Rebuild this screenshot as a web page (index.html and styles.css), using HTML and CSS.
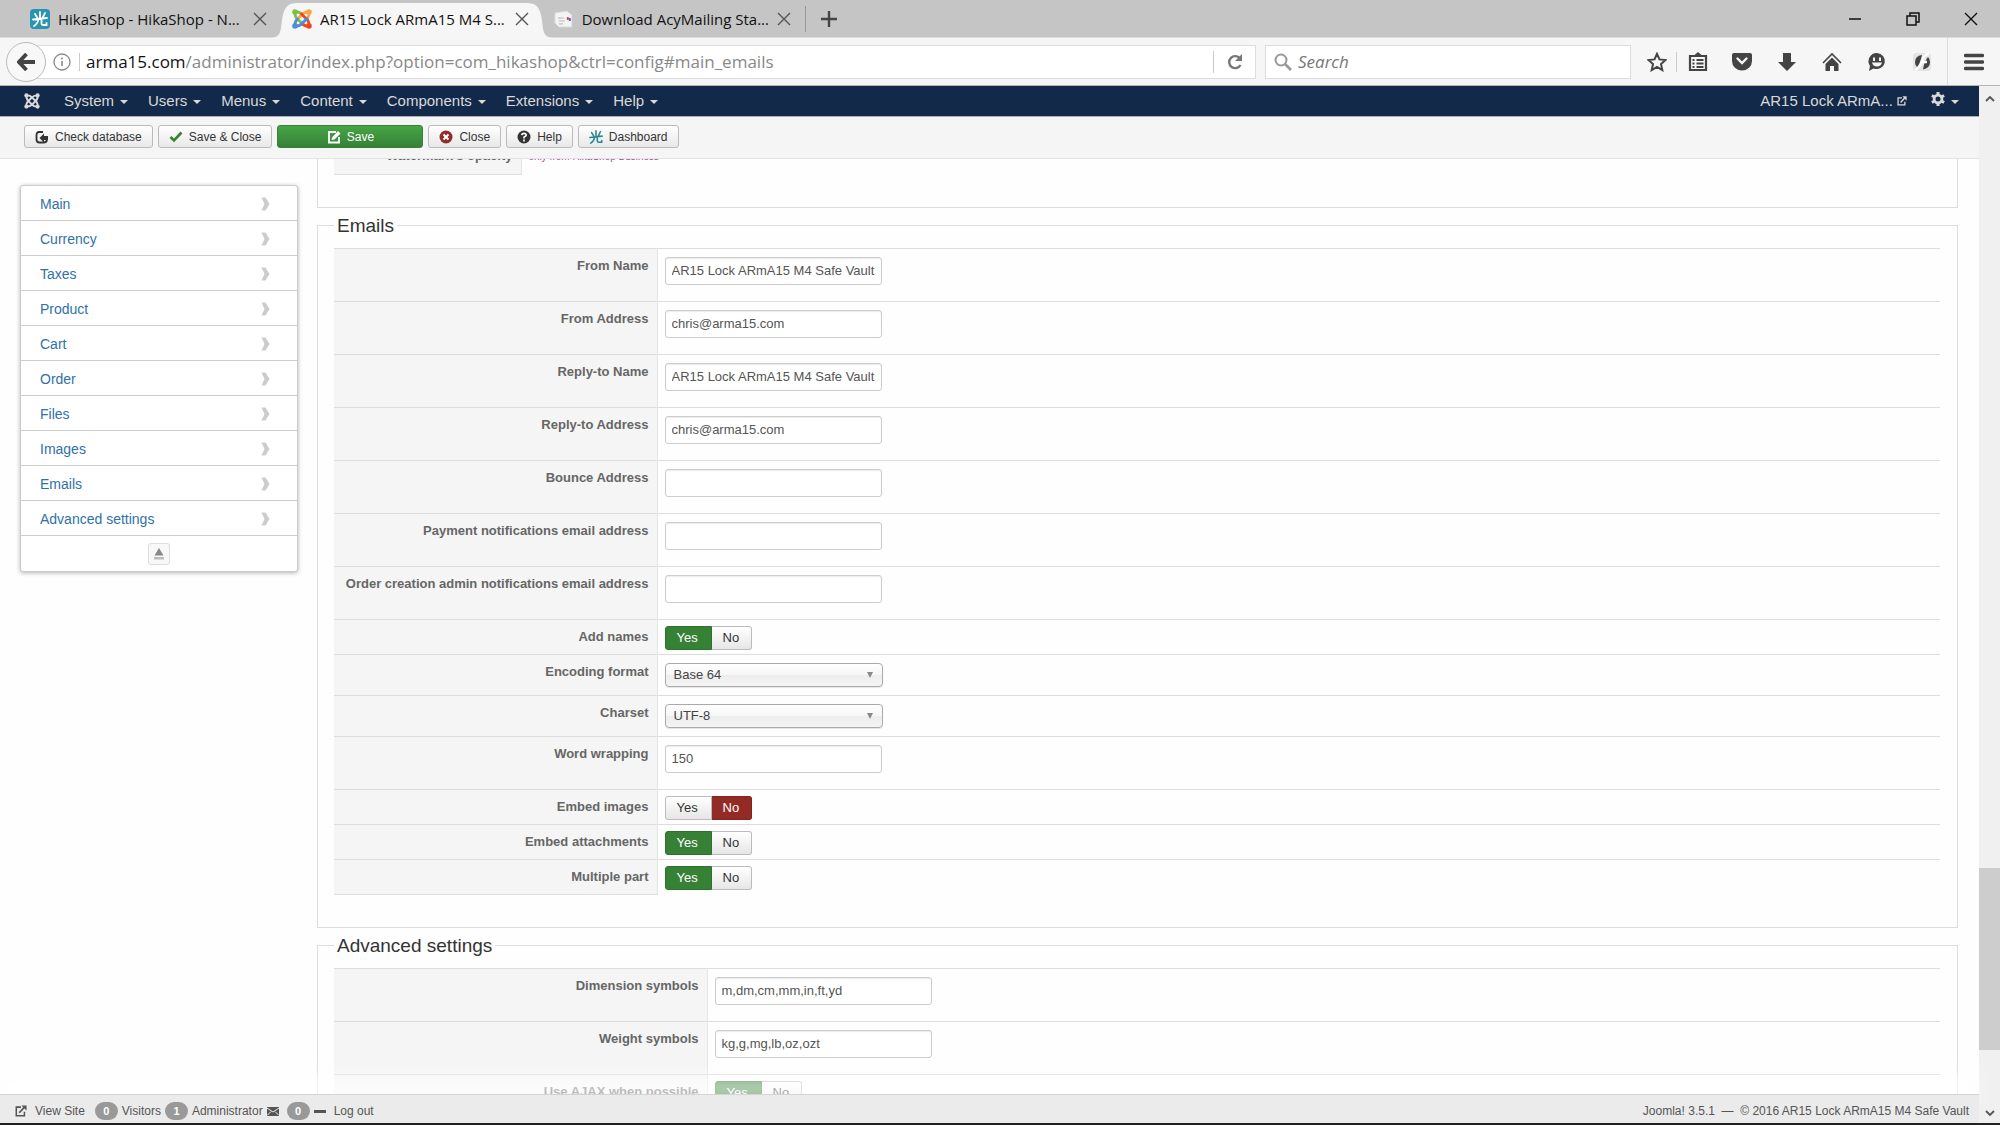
FILE: index.html
```
<!DOCTYPE html>
<html lang="en">
<head>
  <meta charset="UTF-8" />
  <meta name="viewport" content="width=device-width, initial-scale=1.0" />
  <title>AR15 Lock ARmA15 M4 Safe Vault - Administration</title>
  <link rel="stylesheet" href="styles.css">
</head>
<body>

<!-- shared icons -->
<svg class="defs" aria-hidden="true">
  <symbol id="i-x" viewBox="0 0 14 14"><path d="M1 1l12 12M13 1L1 13" stroke="currentColor" stroke-width="1.4" fill="none"/></symbol>
  <symbol id="i-joomla" viewBox="0 0 20 20">
    <g fill="none" stroke="currentColor" stroke-width="2.4" stroke-linecap="round">
      <path d="M3 3Q2.500 7.500 6 10.500L10.500 15M3 3Q7.500 2.500 10 5.500"/>
      <path d="M17 3Q12.500 2.500 9.500 6L5 10.500M17 3Q17.500 7.500 14.500 10"/>
      <path d="M17 17Q17.500 12.500 14 9.500L9.500 5M17 17Q12.500 17.500 10 14.500"/>
      <path d="M3 17Q7.500 17.500 10.500 14L15 9.500M3 17Q2.500 12.500 5.500 10"/>
    </g>
    <g fill="currentColor"><circle cx="3" cy="3" r="2.600"/><circle cx="17" cy="3" r="2.600"/><circle cx="3" cy="17" r="2.600"/><circle cx="17" cy="17" r="2.600"/></g>
  </symbol>
  <symbol id="i-hika" viewBox="0 0 16 16"><path d="M8 1v7M3 3l2.500 4M13 2l-2.500 5M1 8.500L15 7M6.500 8Q6 12.500 2 15M9.500 8v4.500Q9.500 14 11 14h3.500v-2" fill="none" stroke="currentColor" stroke-width="1.800" stroke-linecap="round"/></symbol>
  <symbol id="i-out" viewBox="0 0 14 14"><path d="M7 2.500H1.500v10h9.500V8" fill="none" stroke="currentColor" stroke-width="1.800"/><path d="M5 9l6-6.500" stroke="currentColor" stroke-width="2"/><path d="M7.500 0.500H13.500v6z" fill="currentColor"/></symbol>
  <symbol id="i-chev" viewBox="0 0 10 14"><path d="M1.500 0.500h4l4 6.500-4 6.500h-4l3-6.500z" fill="currentColor"/></symbol>
</svg>

<header class="tabs">
  <div class="tab">
    <svg class="favicon" viewBox="0 0 20 20"><rect width="20" height="20" rx="4" fill="#2a93ad"/><use href="#i-hika" x="2" y="2" width="16" height="16" color="#fff"/></svg>
    <span class="tab-title">HikaShop - HikaShop - N...</span>
    <button class="tab-close" aria-label="Close tab"><svg width="14" height="14"><use href="#i-x"/></svg></button>
  </div>
  <div class="tab active">
    <svg class="tab-shape" viewBox="0 0 272 36" preserveAspectRatio="none" aria-hidden="true"><path d="M0 36C12 36 10 26 12 15C14 4 18 1 26 1H246C254 1 258 4 260 15C262 26 260 36 272 36z" fill="#f6f6f6"/></svg>
    <svg class="favicon" viewBox="0 0 20 20">
      <g fill="none" stroke-width="2.800" stroke-linecap="round">
        <path d="M3 3Q2.500 7.500 6 10.500L10.500 15M3 3Q7.500 2.500 10 5.500" stroke="#7ac143"/>
        <path d="M17 3Q12.500 2.500 9.500 6L5 10.500M17 3Q17.500 7.500 14.500 10" stroke="#f9a541"/>
        <path d="M17 17Q17.500 12.500 14 9.500L9.500 5M17 17Q12.500 17.500 10 14.500" stroke="#f44321"/>
        <path d="M3 17Q7.500 17.500 10.500 14L15 9.500M3 17Q2.500 12.500 5.500 10" stroke="#4a8fd8"/>
      </g>
      <circle cx="3" cy="3" r="2.800" fill="#7ac143"/><circle cx="17" cy="3" r="2.800" fill="#f9a541"/><circle cx="3" cy="17" r="2.800" fill="#4a8fd8"/><circle cx="17" cy="17" r="2.800" fill="#f44321"/>
    </svg>
    <span class="tab-title">AR15 Lock ARmA15 M4 S...</span>
    <button class="tab-close" aria-label="Close tab"><svg width="14" height="14"><use href="#i-x"/></svg></button>
  </div>
  <div class="tab last">
    <svg class="favicon" viewBox="0 0 20 20"><path d="M1 4l12-2 5 4v12H5l-4-4z" fill="#f4f4f4" stroke="#ddd"/><path d="M4 9h6M5 12h6M5 15h4" stroke="#b5b5b5"/><path d="M13 8h2v3h-2z" fill="#d44"/><path d="M15 9h2v3h-2z" fill="#46b"/></svg>
    <span class="tab-title">Download AcyMailing Sta...</span>
    <button class="tab-close" aria-label="Close tab"><svg width="14" height="14"><use href="#i-x"/></svg></button>
  </div>
  <button class="new-tab" aria-label="New tab"><svg width="16" height="16" viewBox="0 0 16 16"><path d="M8 0v16M0 8h16" stroke="#444" stroke-width="2.400"/></svg></button>
  <div class="window-buttons">
    <button aria-label="Minimize"><svg width="14" height="14" viewBox="0 0 14 14"><path d="M1 7h12" stroke="#111" stroke-width="1.500"/></svg></button>
    <button aria-label="Restore"><svg width="14" height="14" viewBox="0 0 14 14"><path d="M1 4h9v9H1zM4 4V1h9v9h-3" fill="none" stroke="#111" stroke-width="1.500"/></svg></button>
    <button aria-label="Close window"><svg width="14" height="14"><use href="#i-x"/></svg></button>
  </div>
</header>

<div class="browser-bar">
  <button class="back" aria-label="Back"><svg width="18" height="18" viewBox="0 0 18 18"><path d="M9.500 1L2 9l7.500 8M2.500 9H18" fill="none" stroke="#444" stroke-width="3.800"/></svg></button>
  <div class="url">
    <svg class="info" width="18" height="18" viewBox="0 0 18 18"><circle cx="9" cy="9" r="8" fill="none" stroke="#888" stroke-width="1.300"/><path d="M9 8v5M9 4.500v2" stroke="#888" stroke-width="1.600"/></svg>
    <label class="host" for="address">arma15.com</label>
    <input id="address" type="text" value="/administrator/index.php?option=com_hikashop&amp;ctrl=config#main_emails">
    <button class="reload" aria-label="Reload"><svg width="16" height="16" viewBox="0 0 16 16"><path d="M13 4.500A6 6 0 1 0 13.500 11" fill="none" stroke="#777" stroke-width="2.400"/><path d="M15 0v7H8z" fill="#777"/></svg></button>
  </div>
  <div class="search">
    <svg width="18" height="18" viewBox="0 0 18 18"><circle cx="7" cy="7" r="5.500" fill="none" stroke="#999" stroke-width="2"/><path d="M11 11l6 6" stroke="#999" stroke-width="2.600"/></svg>
    <input type="text" placeholder="Search" aria-label="Search">
  </div>
  <div class="browser-icons">
    <button class="star" aria-label="Bookmark"><svg width="20" height="20" viewBox="0 0 20 20"><path d="M10 1.800l2.500 5.600 6 .6-4.500 4.100 1.300 6-5.300-3.100-5.300 3.100 1.300-6L1.500 8l6-.6z" fill="none" stroke="#444" stroke-width="2"/></svg></button>
    <button class="list" aria-label="Bookmarks list"><svg width="20" height="20" viewBox="0 0 20 20"><path d="M2 4h16v14H2z" fill="none" stroke="#444" stroke-width="2.200"/><path d="M6 3.500L10 0l4 3.500z" fill="#444"/><path d="M4.500 8h2M8.500 8h7M4.500 11.500h2M8.500 11.500h7M4.500 15h2M8.500 15h7" fill="none" stroke="#444" stroke-width="1.800"/></svg></button>
    <button aria-label="Pocket"><svg width="20" height="20" viewBox="0 0 20 20"><path d="M2 1h16q2 0 2 2v6a10 9.500 0 0 1-20 0V3q0-2 2-2z" fill="#444"/><path d="M5.500 6.500L10 11l4.500-4.500" fill="none" stroke="#f6f6f6" stroke-width="2.400" stroke-linecap="round"/></svg></button>
    <button aria-label="Downloads"><svg width="20" height="20" viewBox="0 0 20 20"><path d="M6 1h8v9h5l-9 9-9-9h5z" fill="#444"/></svg></button>
    <button aria-label="Home"><svg width="20" height="20" viewBox="0 0 20 20"><path d="M1 11l9-9 9 9" fill="none" stroke="#444" stroke-width="1.600"/><path d="M3.500 12L10 5.500l6.500 6.500V19H12v-5H8v5H3.500z" fill="#444"/></svg></button>
    <button aria-label="Chat"><svg width="20" height="20" viewBox="0 0 20 20"><path d="M10 1a8.500 8 0 1 1-3.500 15.500L2 19l1-5A8.300 8.300 0 0 1 10 1z" fill="#444"/><path d="M6 5.500h2V9H6zM12 5.500h2V9h-2z" fill="#f6f6f6"/><path d="M5 10.500h10q-1 4-5 4t-5-4z" fill="#f6f6f6"/></svg></button>
    <button aria-label="Flash"><svg width="20" height="20" viewBox="0 0 20 20"><rect x="1" y="1" width="18" height="18" rx="3" fill="#e4e4e4"/><path d="M10 3Q3 4 3 10q0 3 2 5Q8 12 10 3zM16 5q2 2 2 5 0 6-7 7.500Q12 10 16 5z" fill="#444"/><path d="M17 2q-5 0-7 7T3 18M9 10h6" fill="none" stroke="#fff" stroke-width="2.400"/></svg></button>
    <button class="menu" aria-label="Menu"><svg width="20" height="18" viewBox="0 0 20 18"><path d="M1.500 2.500h17M1.500 9h17M1.500 15.500h17" stroke="#444" stroke-width="3.400" stroke-linecap="round"/></svg></button>
  </div>
</div>

<div class="viewport">
  <div class="page">

    <nav class="admin-nav">
      <svg class="logo" width="16" height="16"><use href="#i-joomla"/></svg>
      <a href="#">System</a>
      <a href="#">Users</a>
      <a href="#">Menus</a>
      <a href="#">Content</a>
      <a href="#">Components</a>
      <a href="#">Extensions</a>
      <a href="#">Help</a>
      <a href="#" class="site">AR15 Lock ARmA... <svg width="10" height="10"><use href="#i-out"/></svg></a>
      <a href="#" class="gear" aria-label="User menu"><svg width="14" height="14" viewBox="0 0 14 14"><circle cx="7" cy="7" r="3.900" fill="none" stroke="currentColor" stroke-width="2.800"/><path d="M7 0v2.500M7 11.500V14M0.900 3.500l2.200 1.200M10.900 9.300l2.200 1.200M0.900 10.500l2.200-1.200M10.900 4.700l2.200-1.200" stroke="currentColor" stroke-width="3"/></svg></a>
    </nav>

    <div class="toolbar">
      <button class="btn"><svg width="14" height="14" viewBox="0 0 14 14"><path d="M8 2H4Q1.500 2 1.500 5v4.500q0 3 3 3h4q3 0 3.500-2.500" fill="none" stroke="#333" stroke-width="1.800"/><path d="M4.500 8L9 3.500V6h4v4H9v2.500z" fill="#333"/></svg>Check database</button>
      <button class="btn"><svg width="14" height="14" viewBox="0 0 14 14"><path d="M1.500 7L5 10.500 12.500 2.500" fill="none" stroke="#378137" stroke-width="2.600"/></svg>Save &amp; Close</button>
      <button class="btn btn-save"><svg width="14" height="14" viewBox="0 0 14 14"><path d="M9 2H2v10.500h10V7" fill="none" stroke="#fff" stroke-width="1.800"/><path d="M5 7.500L11 1l2.500 2.500L7.500 9.500 4.500 10z" fill="#fff"/></svg>Save</button>
      <button class="btn"><svg width="14" height="14" viewBox="0 0 14 14"><circle cx="7" cy="7" r="6.500" fill="#942a25"/><path d="M4.500 4.500l5 5M9.500 4.500l-5 5" stroke="#fff" stroke-width="2"/></svg>Close</button>
      <button class="btn"><svg width="14" height="14" viewBox="0 0 14 14"><circle cx="7" cy="7" r="6.500" fill="#333"/><path d="M4.800 5.200Q5 3.300 7 3.300t2.200 1.800Q9.200 6.300 7 7.200v1.300M7 9.500v2" fill="none" stroke="#fff" stroke-width="1.700"/></svg>Help</button>
      <button class="btn"><svg width="14" height="14" color="#2a8794"><use href="#i-hika"/></svg>Dashboard</button>
    </div>

    <div class="content">
      <ul class="sidebar">
        <li><a href="#">Main<svg width="10" height="14"><use href="#i-chev"/></svg></a></li>
        <li><a href="#">Currency<svg width="10" height="14"><use href="#i-chev"/></svg></a></li>
        <li><a href="#">Taxes<svg width="10" height="14"><use href="#i-chev"/></svg></a></li>
        <li><a href="#">Product<svg width="10" height="14"><use href="#i-chev"/></svg></a></li>
        <li><a href="#">Cart<svg width="10" height="14"><use href="#i-chev"/></svg></a></li>
        <li><a href="#">Order<svg width="10" height="14"><use href="#i-chev"/></svg></a></li>
        <li><a href="#">Files<svg width="10" height="14"><use href="#i-chev"/></svg></a></li>
        <li><a href="#">Images<svg width="10" height="14"><use href="#i-chev"/></svg></a></li>
        <li><a href="#">Emails<svg width="10" height="14"><use href="#i-chev"/></svg></a></li>
        <li><a href="#">Advanced settings<svg width="10" height="14"><use href="#i-chev"/></svg></a></li>
        <li class="collapse"><button aria-label="Collapse menu"><svg width="12" height="12" viewBox="0 0 12 12"><path d="M6 0l4.500 7.500h-9z" fill="#888"/><path d="M1 9h10v2.500H1z" fill="#bbb"/></svg></button></li>
      </ul>

      <div class="settings">
        <fieldset class="images">
          <table>
            <tr><th>Watermark's opacity</th><td><span class="notice">only from HikaShop Business</span></td></tr>
          </table>
        </fieldset>

        <fieldset>
          <legend>Emails</legend>
          <table class="emails">
            <tr class="text-row"><th><label for="from_name">From Name</label></th><td><input type="text" id="from_name" value="AR15 Lock ARmA15 M4 Safe Vault"></td></tr>
            <tr class="text-row"><th><label for="from_email">From Address</label></th><td><input type="text" id="from_email" value="chris@arma15.com"></td></tr>
            <tr class="text-row"><th><label for="reply_name">Reply-to Name</label></th><td><input type="text" id="reply_name" value="AR15 Lock ARmA15 M4 Safe Vault"></td></tr>
            <tr class="text-row"><th><label for="reply_email">Reply-to Address</label></th><td><input type="text" id="reply_email" value="chris@arma15.com"></td></tr>
            <tr class="text-row"><th><label for="bounce_email">Bounce Address</label></th><td><input type="text" id="bounce_email"></td></tr>
            <tr class="text-row"><th><label for="payment_email">Payment notifications email address</label></th><td><input type="text" id="payment_email"></td></tr>
            <tr class="text-row"><th><label for="order_email">Order creation admin notifications email address</label></th><td><input type="text" id="order_email"></td></tr>
            <tr class="toggle-row"><th>Add names</th><td><div class="toggle" role="radiogroup" aria-label="Add names"><label class="yes"><input type="radio" name="add_names" checked>Yes</label><label class="no"><input type="radio" name="add_names">No</label></div></td></tr>
            <tr class="select-row"><th><label for="encoding">Encoding format</label></th><td><div class="select"><select id="encoding"><option>Base 64</option></select></div></td></tr>
            <tr class="select-row"><th><label for="charset">Charset</label></th><td><div class="select"><select id="charset"><option>UTF-8</option></select></div></td></tr>
            <tr class="text-row"><th><label for="wrap">Word wrapping</label></th><td><input type="text" id="wrap" value="150"></td></tr>
            <tr class="toggle-row"><th>Embed images</th><td><div class="toggle" role="radiogroup" aria-label="Embed images"><label class="yes"><input type="radio" name="embed_images">Yes</label><label class="no"><input type="radio" name="embed_images" checked>No</label></div></td></tr>
            <tr class="toggle-row"><th>Embed attachments</th><td><div class="toggle" role="radiogroup" aria-label="Embed attachments"><label class="yes"><input type="radio" name="embed_files" checked>Yes</label><label class="no"><input type="radio" name="embed_files">No</label></div></td></tr>
            <tr class="toggle-row"><th>Multiple part</th><td><div class="toggle" role="radiogroup" aria-label="Multiple part"><label class="yes"><input type="radio" name="multiple_part" checked>Yes</label><label class="no"><input type="radio" name="multiple_part">No</label></div></td></tr>
          </table>
        </fieldset>

        <fieldset>
          <legend>Advanced settings</legend>
          <table class="advanced">
            <tr class="text-row"><th><label for="dimensions">Dimension symbols</label></th><td><input type="text" id="dimensions" value="m,dm,cm,mm,in,ft,yd"></td></tr>
            <tr class="text-row"><th><label for="weights">Weight symbols</label></th><td><input type="text" id="weights" value="kg,g,mg,lb,oz,ozt"></td></tr>
            <tr class="toggle-row"><th>Use AJAX when possible</th><td><div class="toggle" role="radiogroup" aria-label="Use AJAX when possible"><label class="yes"><input type="radio" name="ajax" checked>Yes</label><label class="no"><input type="radio" name="ajax">No</label></div></td></tr>
          </table>
        </fieldset>
      </div>
    </div>

    <footer class="status">
      <a href="#" class="view-site"><svg width="12" height="12"><use href="#i-out"/></svg>View Site</a>
      <span class="badge">0</span><span>Visitors</span>
      <span class="badge">1</span><span>Administrator</span>
      <svg class="mail" width="12" height="9" viewBox="0 0 12 9"><path d="M0 0h12v9H0z" fill="#555"/><path d="M0 1l6 4 6-4M0 8.500l4-4M12 8.500l-4-4" fill="none" stroke="#ebebeb"/></svg>
      <span class="badge">0</span>
      <a href="#" class="logout"><span class="dash"></span>Log out</a>
      <span class="copyright">Joomla! 3.5.1 &nbsp;—&nbsp; © 2016 AR15 Lock ARmA15 M4 Safe Vault</span>
    </footer>
  </div>

  <div class="scrollbar">
    <svg width="10" height="7" viewBox="0 0 10 7"><path d="M1 6l4-4 4 4" fill="none" stroke="#555" stroke-width="1.800"/></svg>
    <div class="track"><div class="thumb"></div></div>
    <svg width="10" height="7" viewBox="0 0 10 7"><path d="M1 1l4 4 4-4" fill="none" stroke="#555" stroke-width="1.800"/></svg>
  </div>
</div>

</body>
</html>
```

FILE: styles.css
```
* {
  box-sizing: border-box;
}

body {
  margin: 0;
  height: 100vh;
  display: flex;
  flex-direction: column;
  overflow: hidden;
  font-family: "Liberation Sans", Arial, sans-serif;
  font-size: 13px;
  line-height: 18px;
  color: #333;
  background: #fefefe;
  border-bottom: 2px solid #222;
}

button, input, select {
  font-family: inherit;
  font-size: inherit;
  color: inherit;
}

a {
  text-decoration: none;
}

.defs {
  position: absolute;
  width: 0;
  height: 0;
}

/* browser tabs */
.tabs {
  display: flex;
  align-items: center;
  height: 38px;
  padding-left: 30px;
  background: #c5c5c5;
  border-bottom: 1px solid #dcdcdc;
  font-family: "Open Sans", "Noto Sans", sans-serif;
  font-size: 15px;
  color: #111;
}

.tabs button,
.browser-bar button {
  display: flex;
  align-items: center;
  justify-content: center;
  padding: 0;
  border: none;
  background: none;
}

.tab {
  position: relative;
  display: flex;
  align-items: center;
  gap: 8px;
  width: 262px;
  height: 100%;
  padding-right: 25px;
}

.tab.last {
  width: 251px;
  padding-right: 14px;
}

.tab-shape {
  position: absolute;
  left: -22px;
  bottom: -1px;
  width: 284px;
  height: 36px;
}

.favicon {
  position: relative;
  width: 20px;
  height: 20px;
}

.tab-title {
  position: relative;
  flex: 1;
  white-space: nowrap;
}

.tab-close {
  position: relative;
  color: #555;
}

.tabs .new-tab {
  height: 26px;
  padding-left: 15px;
  border-left: 1px solid #999;
}

.window-buttons {
  display: flex;
  gap: 44px;
  margin-left: auto;
  padding-right: 22px;
}

/* address bar */
.browser-bar {
  display: flex;
  align-items: center;
  height: 48px;
  padding-left: 6px;
  background: #f6f6f6;
  border-bottom: 1px solid #b5b5b5;
  font-family: "Open Sans", "Noto Sans", sans-serif;
  font-size: 17px;
}

.browser-bar .back {
  position: relative;
  width: 40px;
  height: 40px;
  border: 1px solid #bbb;
  border-radius: 50%;
  background: #f8f8f8;
}

.url,
.search {
  display: flex;
  align-items: center;
  height: 34px;
  background: #fff;
  border: 1px solid #ddd;
}

.url {
  flex: 1;
  margin-left: -18px;
  padding-left: 24px;
}

.url input,
.search input {
  flex: 1;
  min-width: 0;
  padding: 0;
  border: none;
  outline: none;
  background: none;
}

.url input {
  color: #888;
}

.host {
  margin-left: 8px;
  padding-left: 6px;
  border-left: 1px solid #ccc;
  color: #111;
}

.browser-bar .reload {
  width: 42px;
  height: 22px;
  border-left: 1px solid #ccc;
}

.search {
  width: 366px;
  margin-left: 9px;
  padding-left: 8px;
  gap: 6px;
}

.search input::placeholder {
  color: #777;
  font-style: italic;
}

.browser-icons {
  display: flex;
  align-items: center;
  height: 100%;
  padding-left: 6px;
}

.browser-icons button {
  width: 45px;
}

.browser-icons .star {
  width: 40px;
  height: 20px;
  border-right: 1px solid #ccc;
}

.browser-icons .list {
  width: 42px;
}

.browser-icons .menu {
  width: 53px;
  height: 100%;
  margin-left: 3px;
  border-left: 1px solid #ddd;
}

/* page */
.viewport {
  flex: 1;
  display: flex;
  min-height: 0;
}

.page {
  flex: 1;
  display: flex;
  flex-direction: column;
  min-width: 0;
}

.admin-nav {
  display: flex;
  align-items: center;
  gap: 20px;
  height: 31px;
  padding: 0 20px 0 24px;
  background: #13294a;
  border-bottom: 1px solid #a9b0bb;
  font-size: 15px;
  color: #d9d9d9;
}

.admin-nav .logo {
  margin-right: 4px;
}

.admin-nav a {
  color: #d9d9d9;
}

.admin-nav a:not(.site)::after {
  content: "";
  display: inline-block;
  margin-left: 6px;
  vertical-align: 2px;
  border: 4px solid transparent;
  border-top-color: #d9d9d9;
  border-bottom: none;
}

.admin-nav .site {
  margin-left: auto;
  margin-right: 4px;
}

.toolbar {
  display: flex;
  align-items: center;
  gap: 5px;
  height: 42px;
  padding: 0 24px 2px;
  background: #f5f5f5;
  border-bottom: 1px solid #e3e3e3;
  font-size: 12px;
}

.btn {
  display: flex;
  align-items: center;
  justify-content: center;
  gap: 6px;
  height: 23px;
  padding: 0 10px;
  border: 1px solid #bbb;
  border-radius: 3px;
  background: linear-gradient(#fff, #e8e8e8);
  white-space: nowrap;
}

.btn-save {
  width: 146px;
  border-color: #378137;
  background: linear-gradient(#46a546, #378137);
  color: #fff;
}

.content {
  flex: 1;
  display: flex;
  align-items: flex-start;
  gap: 19px;
  min-height: 0;
  padding: 0 21px 0 20px;
  overflow: hidden;
}

/* side menu */
.sidebar {
  width: 278px;
  margin: 26px 0 0;
  padding: 0;
  list-style: none;
  background: #fff;
  border: 1px solid #ccc;
  border-radius: 3px;
  box-shadow: 0 1px 4px rgba(0,0,0,0.3);
}

.sidebar li {
  height: 35px;
  border-bottom: 1px solid #ccc;
}

.sidebar a {
  display: flex;
  align-items: center;
  justify-content: space-between;
  height: 100%;
  padding: 2px 27px 0 19px;
  font-size: 14px;
  color: #3071a9;
}

.sidebar svg {
  color: #ccc;
}

.sidebar .collapse {
  display: flex;
  align-items: center;
  justify-content: center;
  border-bottom: none;
}

.collapse button {
  display: flex;
  align-items: center;
  justify-content: center;
  width: 22px;
  height: 22px;
  padding: 0;
  border: 1px solid #ddd;
  border-radius: 3px;
  background: #f8f8f8;
}

/* settings */
.settings {
  flex: 1;
  margin-top: -34px;
}

fieldset {
  margin: 0 0 8px;
  padding: 12px 17px 32px 16px;
  border: 1px solid #ddd;
}

legend {
  padding: 0 3px;
  font-size: 19px;
  line-height: 20px;
}

table {
  width: 100%;
  border-collapse: collapse;
}

tr {
  border-top: 1px solid #ddd;
}

th, td {
  padding: 8px 8px 8px 7px;
  vertical-align: top;
}

th {
  text-align: right;
  color: #666;
  background: #f5f5f5;
  border-right: 1px solid #e5e5e5;
}

tr:last-child th {
  border-bottom: 1px solid #ddd;
}

.images th {
  width: 187px;
}

.emails th {
  width: 323px;
}

.advanced th {
  width: 373px;
}

.notice {
  font-size: 10px;
  color: #a3499b;
}

.text-row {
  height: 53px;
}

.select-row {
  height: 41px;
}

.toggle-row {
  height: 35px;
}

.toggle-row td {
  padding-top: 6px;
  padding-bottom: 4px;
}

td input[type="text"] {
  display: block;
  width: 217px;
  height: 28px;
  padding: 0 6px;
  border: 1px solid #ccc;
  border-radius: 3px;
  background: #fff;
  box-shadow: inset 0 1px 1px rgba(0,0,0,0.08);
  color: #555;
}

.select {
  position: relative;
  width: 218px;
}

.select select {
  display: block;
  width: 100%;
  height: 24px;
  padding: 0 8px;
  appearance: none;
  border: 1px solid #aaa;
  border-radius: 4px;
  background: linear-gradient(#fff, #f6f6f6 50%, #eee 52%, #f4f4f4);
  box-shadow: 0 1px 1px rgba(0,0,0,0.1);
  color: #444;
}

.select::after {
  content: "";
  position: absolute;
  right: 10px;
  top: 9px;
  border: 3px solid transparent;
  border-top: 6px solid #888;
  border-bottom: none;
}

.toggle {
  display: inline-flex;
  height: 24px;
  vertical-align: top;
}

.toggle label {
  padding: 2px 11px;
  border: 1px solid #bbb;
  background: linear-gradient(#fff, #e6e6e6);
}

.toggle .yes {
  width: 47px;
  border-radius: 3px 0 0 3px;
}

.toggle .no {
  width: 40px;
  border-left: none;
  border-radius: 0 3px 3px 0;
}

.toggle input {
  position: absolute;
  opacity: 0;
  pointer-events: none;
}

.toggle .yes:has(:checked) {
  background: #378137;
  border-color: #2f6f2f;
  color: #fff;
}

.toggle .no:has(:checked) {
  background: #942a25;
  border-color: #802420;
  color: #fff;
}

/* status bar */
.status {
  position: relative;
  display: flex;
  align-items: center;
  gap: 4px;
  height: 29px;
  padding: 4px 10px 0 15px;
  background: #ebebeb;
  border-top: 1px solid #d4d4d4;
  box-shadow: 0 -20px 15px rgba(255,255,255,0.6);
  font-size: 12px;
  color: #555;
}

.status a {
  display: flex;
  align-items: center;
  gap: 8px;
  color: #555;
}

.view-site {
  margin-right: 6px;
}

.badge {
  width: 23px;
  border-radius: 9px;
  background: #999;
  color: #fff;
  font-size: 11px;
  font-weight: bold;
  text-align: center;
}

.status .mail {
  margin-right: 4px;
}

.dash {
  width: 12px;
  height: 3px;
  background: #555;
}

.copyright {
  margin-left: auto;
}

.scrollbar {
  display: flex;
  flex-direction: column;
  align-items: center;
  width: 21px;
  padding: 9px 0 6px;
  background: #f0f0f0;
}

.track {
  flex: 1;
  display: flex;
  flex-direction: column;
  width: 100%;
}

.track::before {
  content: "";
  flex: 76;
}

.thumb {
  flex: 18;
  background: #cdcdcd;
}

.track::after {
  content: "";
  flex: 6;
}
```
